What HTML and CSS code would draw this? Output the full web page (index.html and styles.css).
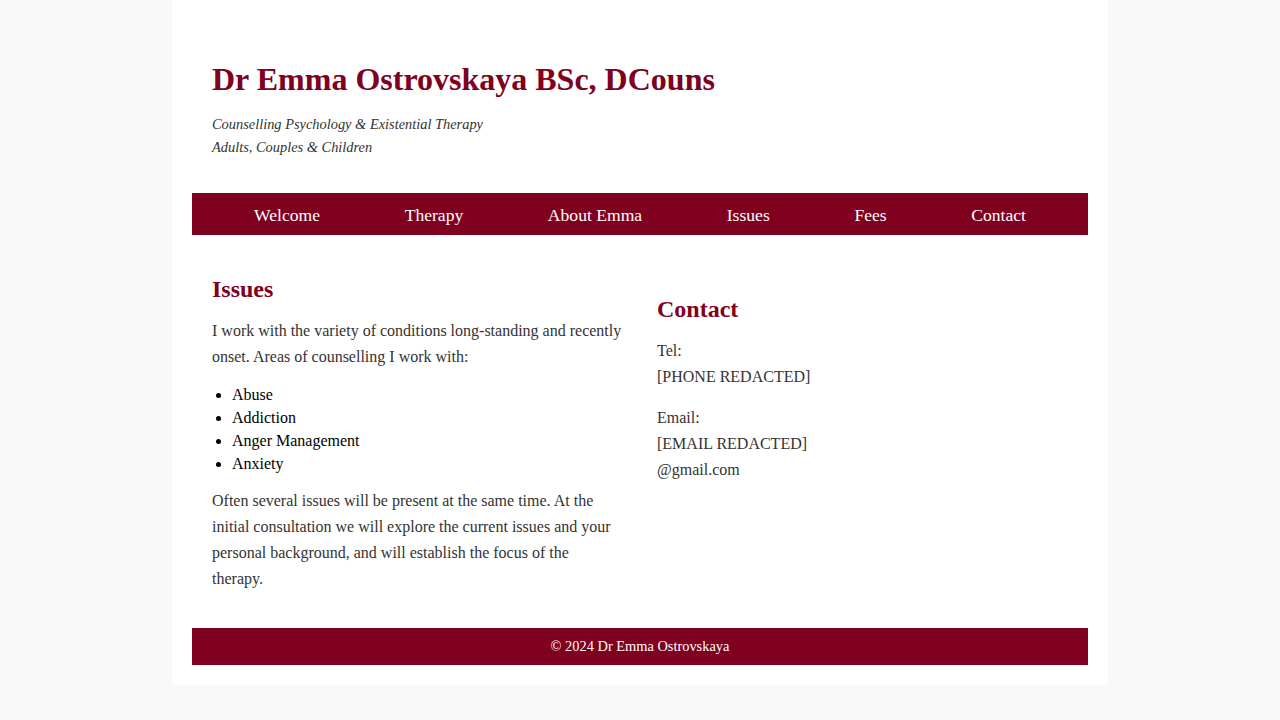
FILE: index.html
```html
<!DOCTYPE html>
<html lang="en">
<head>
<meta charset="utf-8">
<title>Dr Emma Ostrovskaya</title>
<link rel="stylesheet" href="styles.css">
</head>
<body>
<div class="page">
  <header class="site-header">
    <h1 class="site-title">Dr Emma Ostrovskaya BSc, DCouns</h1>
    <p class="tagline">Counselling Psychology &amp; Existential Therapy<br>Adults, Couples &amp; Children</p>
  </header>
  <nav class="main-nav">
    <a href="#">Welcome</a>
    <a href="#">Therapy</a>
    <a href="#">About Emma</a>
    <a href="#">Issues</a>
    <a href="#">Fees</a>
    <a href="#">Contact</a>
  </nav>
  <main class="content">
    <section class="primary">
      <h2 class="section-title">Issues</h2>
      <p class="text">I work with the variety of conditions long-standing and recently onset. Areas of counselling I work with:</p>
      <ul class="issue-list">
        <li>Abuse</li>
        <li>Addiction</li>
        <li>Anger Management</li>
        <li>Anxiety</li>
      </ul>
      <p class="text">Often several issues will be present at the same time. At the initial consultation we will explore the current issues and your personal background, and will establish the focus of the therapy.</p>
    </section>
    <aside class="sidebar">
      <h2 class="section-title">Contact</h2>
      <p class="text contact-item">Tel:<br>[PHONE REDACTED]</p>
      <p class="text contact-item">Email:<br>[EMAIL REDACTED]<br>@gmail.com</p>
    </aside>
  </main>
  <footer class="site-footer">© 2024 Dr Emma Ostrovskaya</footer>
</div>
</body>
</html>
```
FILE: styles.css
```css
html, body {
  margin: 0;
  padding: 0;
}
body {
  background: #f9f9f9;
  font-family: "Liberation Serif", "Times New Roman", serif;
  color: #333;
}
.page {
  width: 896px;
  margin: 0 auto;
  background: #fff;
  padding: 20px;
}
.site-header {
  padding: 20px 20px 0;
  height: 173px;
  box-sizing: border-box;
}
.site-title {
  margin: 20px 0 15px;
  font-size: 32px;
  line-height: 38px;
  font-weight: bold;
  color: #800020;
}
.tagline {
  margin: 0;
  font-size: 14.4px;
  line-height: 23px;
  font-style: italic;
  color: #333;
}
.main-nav {
  background: #800020;
  height: 42px;
  display: flex;
  justify-content: center;
  align-items: center;
  gap: 84.6px;
}
.main-nav a {
  color: #fff;
  text-decoration: none;
  font-size: 17.6px;
  padding-top: 2px;
}
.content {
  display: flex;
  gap: 34px;
  padding: 40px 20px 23px;
}
.primary, .sidebar {
  flex: 1;
}
.sidebar {
  padding-top: 20px;
}
.section-title {
  margin: 0 0 14px;
  font-size: 24px;
  line-height: 29px;
  font-weight: bold;
  color: #800020;
}
.text {
  margin: 0 0 13px;
  font-size: 16px;
  line-height: 26px;
  color: #333;
}
.contact-item {
  margin-bottom: 15px;
}
.issue-list {
  margin: 0 0 13px;
  padding-left: 20px;
  font-size: 16px;
  line-height: 23px;
  color: #000;
}
.site-footer {
  background: #800020;
  color: #fff;
  text-align: center;
  font-size: 14.4px;
  height: 37px;
  line-height: 37px;
}
```
